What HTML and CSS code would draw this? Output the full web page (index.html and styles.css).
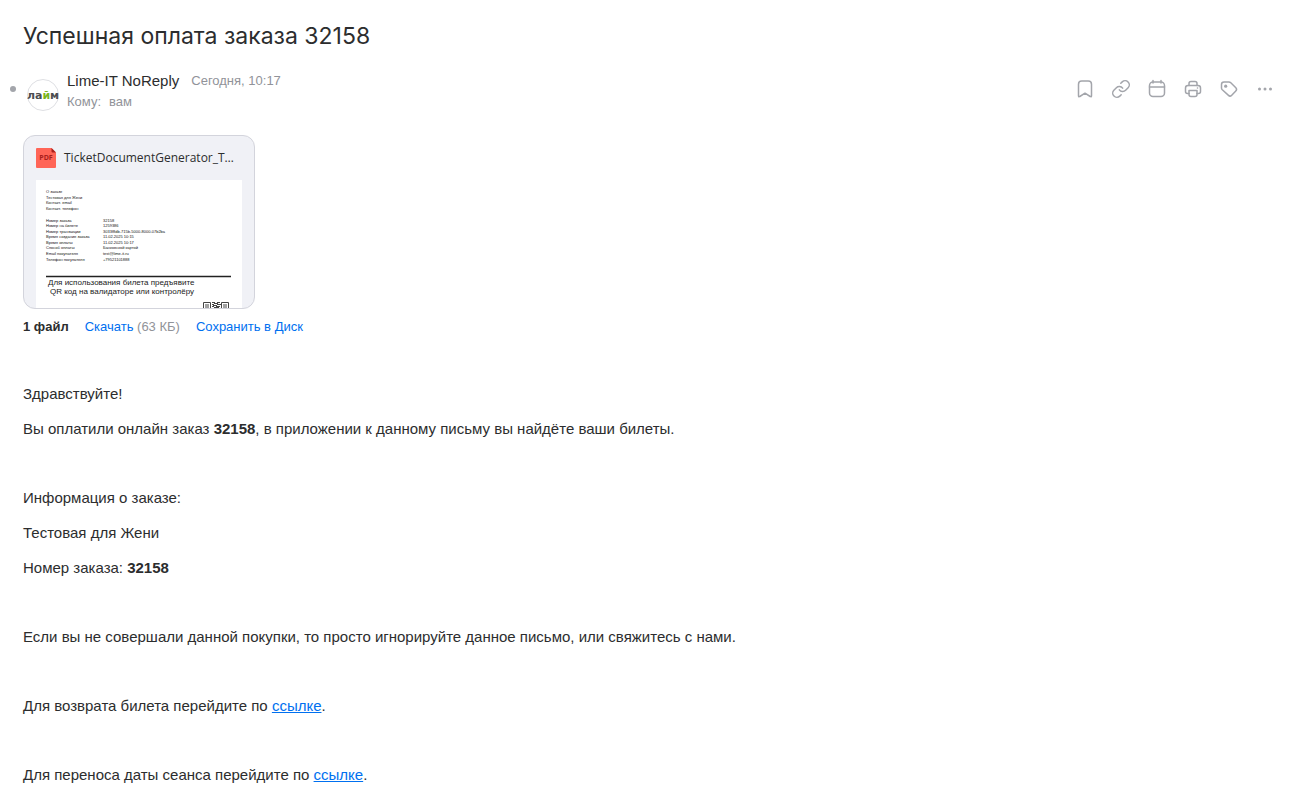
FILE: index.html
```html
<!DOCTYPE html>
<html lang="ru">
<head>
  <meta charset="UTF-8" />
  <meta name="viewport" content="width=device-width, initial-scale=1.0"/>
  <title>Успешная оплата заказа 32158</title>
  <link rel="stylesheet" href="styles.css">
</head>
<body>

<main class="letter">
  <h1 class="subject">Успешная оплата заказа 32158</h1>

  <!-- Sender and actions -->
  <header class="letter-head">
    <button class="read-dot" aria-label="Пометить непрочитанным"></button>
    <svg class="avatar" viewBox="0 0 32 32" aria-hidden="true">
      <circle cx="16" cy="16" r="15.5" fill="#fff" stroke="#dedfe3"/>
      <text x="16" y="20" text-anchor="middle" class="avatar-text">ла<tspan fill="#7ab51d">й</tspan>м</text>
    </svg>
    <div class="sender">
      <div class="sender-row">
        <span class="sender-name">Lime-IT NoReply</span>
        <span class="muted">Сегодня, 10:17</span>
      </div>
      <div class="to-row muted">
        <span>Кому:</span>
        <span>вам</span>
      </div>
    </div>
    <div class="actions">
      <button aria-label="Отметить флажком">
        <svg viewBox="0 0 20 20"><path d="M3.500 16.800V5.200Q3.500 2 6.700 2h6.600Q16.500 2 16.500 5.200v11.600q0 1.600-1.300.7L10 14.200l-5.200 3.300q-1.300.9-1.300-.7z"/></svg>
      </button>
      <button aria-label="Скопировать ссылку">
        <svg class="link-icon" viewBox="0 0 24 24"><path d="M10 13a5 5 0 0 0 7.540.540l3-3a5 5 0 0 0-7.070-7.070l-1.720 1.710"/><path d="M14 11a5 5 0 0 0-7.540-.540l-3 3a5 5 0 0 0 7.070 7.070l1.710-1.710"/></svg>
      </button>
      <button aria-label="Создать событие">
        <svg viewBox="0 0 20 20"><rect x="2.500" y="3" width="15" height="14.500" rx="3.500"/><path d="M2.500 8h15M6 1.500V4M14 1.500V4"/></svg>
      </button>
      <button aria-label="Распечатать">
        <svg viewBox="0 0 20 20"><path d="M6 6.500V4.500Q6 2.500 8 2.500h4Q14 2.500 14 4.500v2"/><path d="M6 14.500H4.500Q2.500 14.500 2.500 12.500V9Q2.500 6.500 5 6.500h10Q17.500 6.500 17.500 9v3.500Q17.500 14.500 15.500 14.500H14"/><path d="M6 11.500h8v4q0 2-2 2H8q-2 0-2-2z"/><circle class="fill" cx="14.500" cy="9" r=".8"/></svg>
      </button>
      <button aria-label="Метки">
        <svg viewBox="0 0 20 20"><path d="M2.500 5.500q0-2.500 2.500-2.500h4.800q1.200 0 2 .8l5 5q1.600 1.600 0 3.200l-4.300 4.400q-1.500 1.500-3 0L3.300 10.800Q2.500 10 2.500 9z"/><circle class="fill" cx="6.700" cy="7.200" r="1.600"/></svg>
      </button>
      <button aria-label="Ещё">
        <svg viewBox="0 0 20 20"><g class="fill"><circle cx="4.500" cy="10" r="1.500"/><circle cx="10" cy="10" r="1.500"/><circle cx="15.500" cy="10" r="1.500"/></g></svg>
      </button>
    </div>
  </header>

  <!-- Attachment -->
  <section class="attachments">
    <div class="file-card">
      <div class="file-title">
        <svg class="pdf-icon" viewBox="0 0 20 20" aria-hidden="true">
          <path d="M1 0h14.500L20 4.500V19q0 1-1 1H1q-1 0-1-1V1q0-1 1-1z" fill="#ff6557"/>
          <path d="M15.500 0L20 4.500h-3.500q-1 0-1-1z" fill="#a8201c"/>
          <text x="10" y="12" text-anchor="middle" class="pdf-text">PDF</text>
        </svg>
        <span class="file-name">TicketDocumentGenerator_T…</span>
      </div>
      <svg class="preview" viewBox="0 0 206 128" role="img" aria-label="Билет">
        <rect width="206" height="128" fill="#fff"/>
        <g class="preview-small">
          <text x="10" y="13">О заказе</text>
          <text x="10" y="19">Тестовая для Жени</text>
          <text x="10" y="24">Контакт. email</text>
          <text x="10" y="30">Контакт. телефон</text>
          <text x="10" y="42">Номер заказа</text>
          <text x="67" y="42">32158</text>
          <text x="10" y="47">Номер на билете</text>
          <text x="67" y="47">1259386</text>
          <text x="10" y="53">Номер транзакции</text>
          <text x="67" y="53">3033f8db-715b-5000-8000-07b2ba</text>
          <text x="10" y="58">Время создания заказа</text>
          <text x="67" y="58">11.02.2025 10:15</text>
          <text x="10" y="64">Время оплаты</text>
          <text x="67" y="64">11.02.2025 10:17</text>
          <text x="10" y="69">Способ оплаты</text>
          <text x="67" y="69">Банковской картой</text>
          <text x="10" y="75">Email покупателя</text>
          <text x="67" y="75">test@lime-it.ru</text>
          <text x="10" y="81">Телефон покупателя</text>
          <text x="67" y="81">+79521101888</text>
        </g>
        <path d="M10 96.500h185" stroke="#222" stroke-width="1.500"/>
        <g class="preview-large">
          <text x="12" y="105">Для использования билета предъявите</text>
          <text x="14" y="114">QR код на валидаторе или контролёру</text>
        </g>
        <g fill="none" stroke="#444">
          <path d="M167.500 128v-5.500h7v5.500M185.500 128v-5.500h7v5.500"/>
          <path d="M169 125h4M169 127h4M187 125h4M187 127h4M176 122.500h3M181 122.500h3M178 123.500h4M176 124.500h2M181 124.500h4M177 125.500h4M176 126.500h2M180 126.500h4M178 127.500h5"/>
        </g>
      </svg>
    </div>
    <div class="file-links">
      <b>1 файл</b>
      <span class="muted"><a href="#">Скачать</a> (63 КБ)</span>
      <a href="#">Сохранить в Диск</a>
    </div>
  </section>

  <!-- Letter text -->
  <article class="letter-body">
    <section>
      <p>Здравствуйте!</p>
      <p>Вы оплатили онлайн заказ <b>32158</b>, в приложении к данному письму вы найдёте ваши билеты.</p>
    </section>
    <section>
      <p>Информация о заказе:</p>
      <p>Тестовая для Жени</p>
      <p>Номер заказа: <b>32158</b></p>
    </section>
    <section>
      <p>Если вы не совершали данной покупки, то просто игнорируйте данное письмо, или свяжитесь с нами.</p>
    </section>
    <section>
      <p>Для возврата билета перейдите по <a href="#">ссылке</a>.</p>
    </section>
    <section>
      <p>Для переноса даты сеанса перейдите по <a href="#">ссылке</a>.</p>
    </section>
  </article>
</main>

</body>
</html>
```
FILE: styles.css
```css
* {
  box-sizing: border-box;
}
body {
  margin: 0;
  background: #fff;
  color: #2c2d2e;
  font-family: "Liberation Sans", Arial, sans-serif;
  font-size: 15px;
  line-height: 20px;
}
button {
  padding: 0;
  border: none;
  background: none;
  cursor: pointer;
}
a {
  color: #0070f0;
}
.letter {
  padding: 20px 19px 20px 23px;
}
.subject {
  margin: 0 0 19px;
  font-family: Inter, sans-serif;
  font-size: 23px;
  font-weight: 400;
  line-height: 32px;
}
.muted {
  color: #919399;
  font-size: 13px;
}

/* Sender */
.letter-head {
  display: flex;
  align-items: flex-start;
  margin-left: -13px;
}
.read-dot {
  width: 6px;
  height: 6px;
  margin-top: 15px;
  border-radius: 50%;
  background: #a3a5ab;
}
.avatar {
  width: 32px;
  height: 32px;
  margin: 8px 8px 0 11px;
}
.avatar-text {
  font-family: "DejaVu Sans", sans-serif;
  font-size: 11px;
  font-weight: 700;
  fill: #4b4c50;
}
.sender {
  flex: 1;
}
.sender-row {
  display: flex;
  gap: 12px;
}
.to-row {
  display: flex;
  gap: 8px;
  line-height: 22px;
}
.actions {
  display: flex;
  gap: 16px;
  margin-top: 8px;
}
.actions button {
  width: 20px;
  height: 20px;
}
.actions svg {
  display: block;
  fill: none;
  stroke: #a3a5ab;
  stroke-width: 1.5;
  stroke-linecap: round;
  stroke-linejoin: round;
}
.actions .link-icon {
  stroke-width: 1.8;
}
.actions .fill {
  fill: #a3a5ab;
  stroke: none;
}

/* Attachment */
.attachments {
  margin-top: 22px;
}
.file-card {
  width: 232px;
  height: 174px;
  padding: 12px 12px 0;
  border: 1px solid #d3d4dc;
  border-radius: 12px;
  background: #f0f1f6;
  overflow: hidden;
}
.file-title {
  display: flex;
  gap: 8px;
  margin-bottom: 12px;
}
.pdf-icon {
  flex: none;
  width: 20px;
  height: 20px;
}
.pdf-text {
  font-family: "Open Sans", sans-serif;
  font-size: 7px;
  font-weight: 700;
  fill: #a8201c;
}
.file-name {
  font-family: "Open Sans", sans-serif;
  font-size: 12px;
  white-space: nowrap;
}
.preview {
  display: block;
  width: 100%;
}
.preview-small {
  font-size: 4px;
  fill: #111;
}
.preview-large {
  font-size: 8px;
  fill: #222;
}
.file-links {
  display: flex;
  gap: 16px;
  margin-top: 8px;
  font-size: 13px;
}
.file-links a {
  text-decoration: none;
}

/* Letter text */
.letter-body {
  display: flex;
  flex-direction: column;
  gap: 49px;
  margin-top: 47px;
}
.letter-body section {
  display: flex;
  flex-direction: column;
  gap: 15px;
}
.letter-body p {
  margin: 0;
}
```
